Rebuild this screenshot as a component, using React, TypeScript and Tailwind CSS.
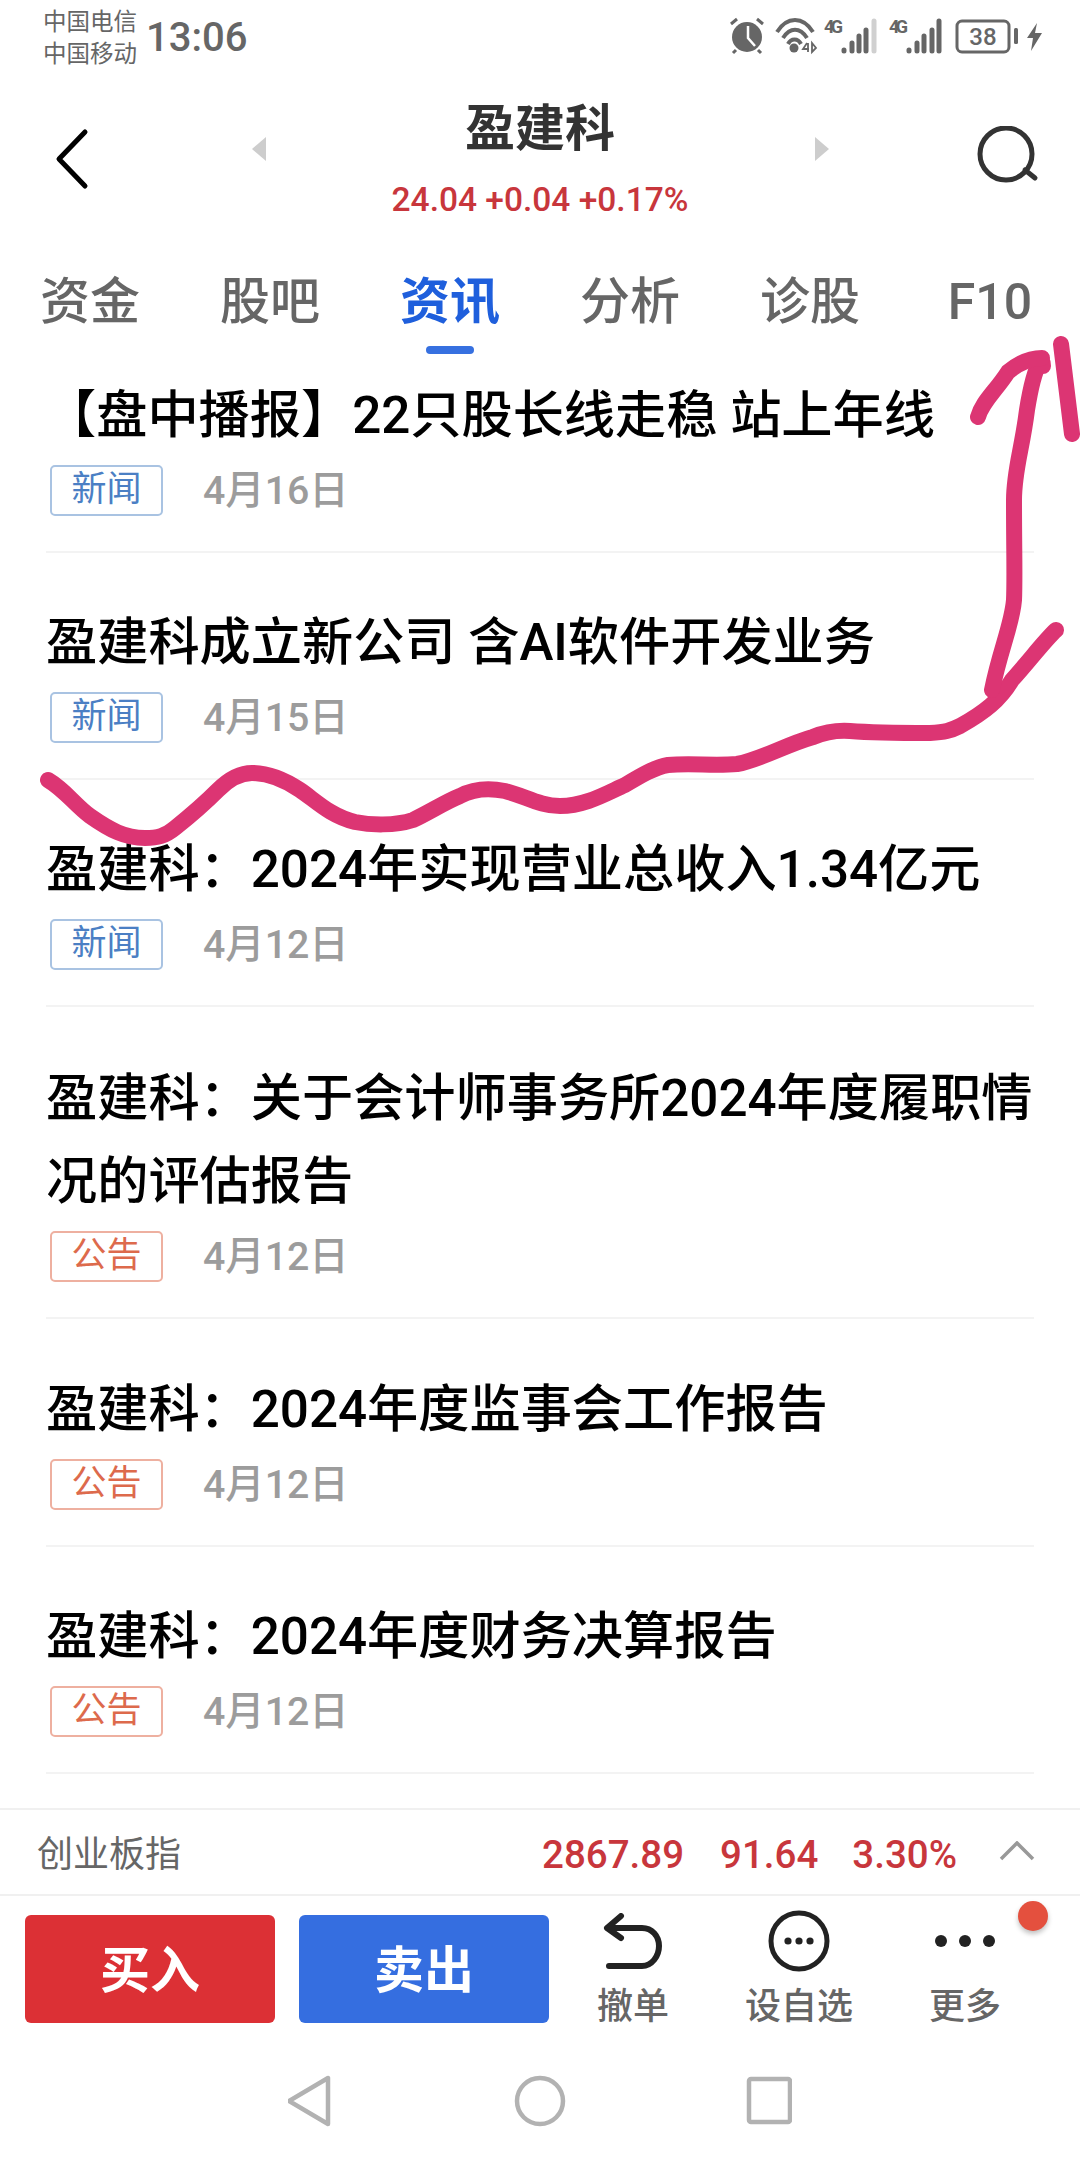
import React from "react";

const F = { fontFamily: '"Roboto","Noto Sans CJK SC",sans-serif' };

type Item = { t: string[]; tag: "新闻" | "公告"; d: string; h: string; first?: boolean };
const items: Item[] = [
  { t: ["【盘中播报】22只股长线走稳 站上年线"], tag: "新闻", d: "4月16日", h: "h-[199px]", first: true },
  { t: ["盈建科成立新公司 含AI软件开发业务"], tag: "新闻", d: "4月15日", h: "h-[227px]" },
  { t: ["盈建科：2024年实现营业总收入1.34亿元"], tag: "新闻", d: "4月12日", h: "h-[227px]" },
  { t: ["盈建科：关于会计师事务所2024年度履职情", "况的评估报告"], tag: "公告", d: "4月12日", h: "h-[312px]" },
  { t: ["盈建科：2024年度监事会工作报告"], tag: "公告", d: "4月12日", h: "h-[228px]" },
  { t: ["盈建科：2024年度财务决算报告"], tag: "公告", d: "4月12日", h: "h-[227px]" },
];

function Row({ item }: { item: Item }) {
  const news = item.tag === "新闻";
  return (
    <div className={`${item.h} flex flex-col justify-end border-b-2 border-[#f3f3f3] pb-[30px]`}>
      <div className={`text-[51.2px] leading-[83px] font-medium text-black whitespace-nowrap ${item.first ? "-ml-[1px]" : ""}`}>
        {item.t.map((l) => (
          <div key={l}>{l}</div>
        ))}
      </div>
      <div className="mt-[3px] flex items-center">
        <div
          className={`w-[113px] h-[51px] ml-[4px] rounded-[5px] border-2 flex items-center justify-center text-[35px] ${
            news ? "border-[#a9c3e2] text-[#4b7fc4]" : "border-[#eeb0a0] text-[#dd6a4c]"
          }`}
        >
          {item.tag}
        </div>
        <div className="ml-[40px] pt-[2px] text-[39.3px] font-medium text-[#9c9c9c]">{item.d}</div>
      </div>
    </div>
  );
}

function StatusIcons() {
  return (
    <svg width="330" height="44" viewBox="0 0 330 44" fill="#666">
      {/* alarm */}
      <circle cx="18" cy="22" r="15" />
      <path d="M19 11v12l7 8" stroke="#fff" strokeWidth="2.5" fill="none" />
      <path d="M2 9l6-5M34 9l-6-5M7 35l-3 3M29 35l3 3" stroke="#666" strokeWidth="3" fill="none" />
      {/* wifi */}
      <path d="M48 17c10-16 26-16 36 0M54 23c7-11 17-11 24 0M59 29c3-6 10-6 13 0" stroke="#666" strokeWidth="4" fill="none" />
      <circle cx="65" cy="33" r="4.5" />
      <path d="M78 28l-4 6h6M79 28v9M83 28v9l4-4z" stroke="#666" strokeWidth="1.8" fill="none" />
      {/* sim 1 */}
      <text x="95" y="18" fontSize="18" fontWeight="700" fontFamily="Roboto" fill="#666" textLength="19">4G</text>
      <g strokeWidth="5" strokeLinecap="round" stroke="#666">
        <path d="M115 36v-1M123 36v-8M130 36v-15M137 36v-21" />
        <path d="M145 36v-30" stroke="#d0d0d0" />
        <path d="M180 36v-1M188 36v-8M195 36v-15M203 36v-21M210 36v-30" />
      </g>
      {/* sim 2 */}
      <text x="160" y="18" fontSize="18" fontWeight="700" fontFamily="Roboto" fill="#666" textLength="19">4G</text>
      {/* battery */}
      <rect x="228" y="6" width="52" height="31" rx="5" fill="none" stroke="#666" strokeWidth="3" />
      <text x="254" y="30" textAnchor="middle" fontSize="24" fontWeight="500" fontFamily="Roboto" fill="#666">38</text>
      <rect x="285" y="13" width="4" height="16" rx="1.5" />
      <path d="M308 8l-10 15h6l-2 13 11-18h-7z" />
    </svg>
  );
}

function Tool({ label, children }: { label: string; children: React.ReactNode }) {
  return (
    <div className="w-[166px] flex flex-col items-center">
      <div className="h-[66px] flex items-center justify-center">{children}</div>
      <div className="mt-[12px] text-[36px] leading-[42px] font-medium text-[#666]">{label}</div>
    </div>
  );
}

export default function App() {
  return (
    <div style={F} className="relative w-[1080px] h-[2160px] bg-white overflow-hidden">
      {/* status bar */}
      <div className="h-[74px] flex items-start justify-between pl-[43px] pr-[21px]">
        <div className="flex items-start">
          <div className="mt-[6px] text-[23.5px] leading-[32px] text-[#666] w-[103px] whitespace-nowrap">
            <div>中国电信</div>
            <div>中国移动</div>
          </div>
          <div className="mt-[14px] text-[40px] leading-[48px] font-medium text-[#666]">13:06</div>
        </div>
        <div className="mt-[15px]"><StatusIcons /></div>
      </div>

      {/* header */}
      <div className="h-[176px] relative flex flex-col items-center">
        <div className="mt-[25px] text-[50px] leading-[60px] font-bold text-[#333]">盈建科</div>
        <div className="mt-[21px] text-[33.5px] leading-[40px] font-medium text-[#c8363c]">24.04 +0.04 +0.17%</div>
        <svg className="absolute left-[52px] top-[53px]" width="40" height="64" viewBox="0 0 40 64" fill="none">
          <path d="M33 5L7 32l26 27" stroke="#000" strokeWidth="5" strokeLinecap="round" strokeLinejoin="round" />
        </svg>
        <svg className="absolute left-[252px] top-[63px]" width="14" height="24" viewBox="0 0 14 24"><path d="M14 0v24L0 12z" fill="#cdcdcd" /></svg>
        <svg className="absolute left-[815px] top-[63px]" width="14" height="24" viewBox="0 0 14 24"><path d="M0 0v24l14-12z" fill="#cdcdcd" /></svg>
        <svg className="absolute left-[975px] top-[52px]" width="64" height="58" viewBox="0 0 64 58" fill="none">
          <circle cx="31" cy="28" r="26" stroke="#333" strokeWidth="5" />
          <path d="M50 44l10 8" stroke="#333" strokeWidth="5" strokeLinecap="round" />
        </svg>
      </div>

      {/* tabs */}
      <div className="h-[104px] pt-[14px] grid grid-cols-6 text-[50px] leading-[76px] font-medium text-[#666]">
        {["资金", "股吧", "资讯", "分析", "诊股", "F10"].map((t) => (
          <div key={t} className="relative flex justify-center">
            <span className={t === "资讯" ? "font-bold text-[#1f5fdc]" : ""}>{t}</span>
            {t === "资讯" && <span className="absolute left-[66px] bottom-0 w-[48px] h-[8px] rounded-full bg-[#3670e0]" />}
          </div>
        ))}
      </div>

      {/* list */}
      <div className="mx-[46px]">
        {items.map((it, i) => (
          <Row key={i} item={it} />
        ))}
      </div>

      {/* footer */}
      <div className="absolute inset-x-0 bottom-0 h-[352px] flex flex-col bg-white">
        <div className="h-[88px] flex items-center border-y-2 border-[#f0f0f0] pl-[37px] pr-[45px] pt-[6px]">
          <div className="text-[36px] text-[#666]">创业板指</div>
          <div className="ml-auto flex items-center text-[38.5px] font-medium text-[#c8363c]">
            <span>2867.89</span>
            <span className="ml-[36px]">91.64</span>
            <span className="ml-[34px]">3.30%</span>
            <svg className="ml-[42px] -mt-[8px]" width="36" height="20" viewBox="0 0 36 20" fill="none">
              <path d="M2 18L18 2l16 16" stroke="#999" strokeWidth="3.5" />
            </svg>
          </div>
        </div>
        <div className="relative mt-[19px] flex pl-[25px]">
          <div className="w-[250px] h-[108px] pt-[4px] rounded-[6px] bg-[#dc3035] flex items-center justify-center text-[50px] font-bold text-white">买入</div>
          <div className="ml-[24px] w-[250px] h-[108px] pt-[4px] rounded-[6px] bg-[#356ee0] flex items-center justify-center text-[50px] font-bold text-white">卖出</div>
          <div className="ml-[1px] flex -mt-[7px]">
            <Tool label="撤单">
              <svg width="60" height="56" viewBox="0 0 60 56" fill="none" stroke="#222" strokeWidth="6" strokeLinecap="round" strokeLinejoin="round">
                <path d="M18 3L4 15l14 10" />
                <path d="M5 15h34c10 0 17 8 17 18s-7 20-17 20H6" />
              </svg>
            </Tool>
            <Tool label="设自选">
              <svg width="62" height="62" viewBox="0 0 62 62" fill="none">
                <circle cx="31" cy="31" r="28" stroke="#222" strokeWidth="5" />
                <circle cx="20" cy="31" r="3.6" fill="#222" /><circle cx="31" cy="31" r="3.6" fill="#222" /><circle cx="42" cy="31" r="3.6" fill="#222" />
              </svg>
            </Tool>
            <Tool label="更多">
              <svg width="62" height="14" viewBox="0 0 62 14" fill="#222">
                <circle cx="7" cy="7" r="6" /><circle cx="31" cy="7" r="6" /><circle cx="55" cy="7" r="6" />
              </svg>
            </Tool>
          </div>
          <span className="absolute left-[1018px] top-[-14px] w-[30px] h-[30px] rounded-full bg-[#e4503e] shadow-[0_3px_5px_rgba(0,0,0,0.25)]" />
        </div>
        <div className="flex-1 flex items-center justify-center pt-[14px]">
          <svg width="504" height="52" viewBox="0 0 504 52" fill="none" stroke="#b2b2b2" strokeWidth="4.5" strokeLinejoin="round">
            <path d="M40 3v46L1 26z" />
            <circle cx="252" cy="26" r="23" />
            <rect x="461" y="4" width="41" height="43" rx="2" />
          </svg>
        </div>
      </div>

      {/* handwritten ink */}
      <svg className="absolute left-0 top-0 pointer-events-none" width="1080" height="2160" viewBox="0 0 1080 2160" fill="none" stroke="#dc3573" strokeWidth="16" strokeLinecap="round" strokeLinejoin="round">
        <path d="M48 780C65 790 75 805 90 816C110 830 125 838 145 838C158 838 165 836 175 828C190 816 200 808 218 790C230 778 240 773 252 773C268 773 285 780 300 790C315 800 330 816 355 822C370 825 395 826 413 820C430 812 445 802 460 796C475 788 490 788 505 791C525 796 540 806 560 806C585 806 605 794 625 785C640 776 655 767 668 765C690 763 715 766 737 764C760 760 785 745 813 737C825 732 835 730 850 731C875 733 905 733 930 733C945 732 950 731 960 726C985 712 1000 700 1012 680C1030 660 1045 640 1056 630" />
        <path d="M992 690C1000 650 1012 625 1014 600C1015 580 1014 550 1014 500C1014 470 1022 450 1027 410C1031 385 1035 370 1040 362C1042 360 1043 362 1043 366" />
        <path d="M978 417C982 402 995 392 1008 372C1020 362 1030 358 1042 358" />
        <path d="M1061 344C1064 370 1068 400 1072 434" />
      </svg>
    </div>
  );
}
